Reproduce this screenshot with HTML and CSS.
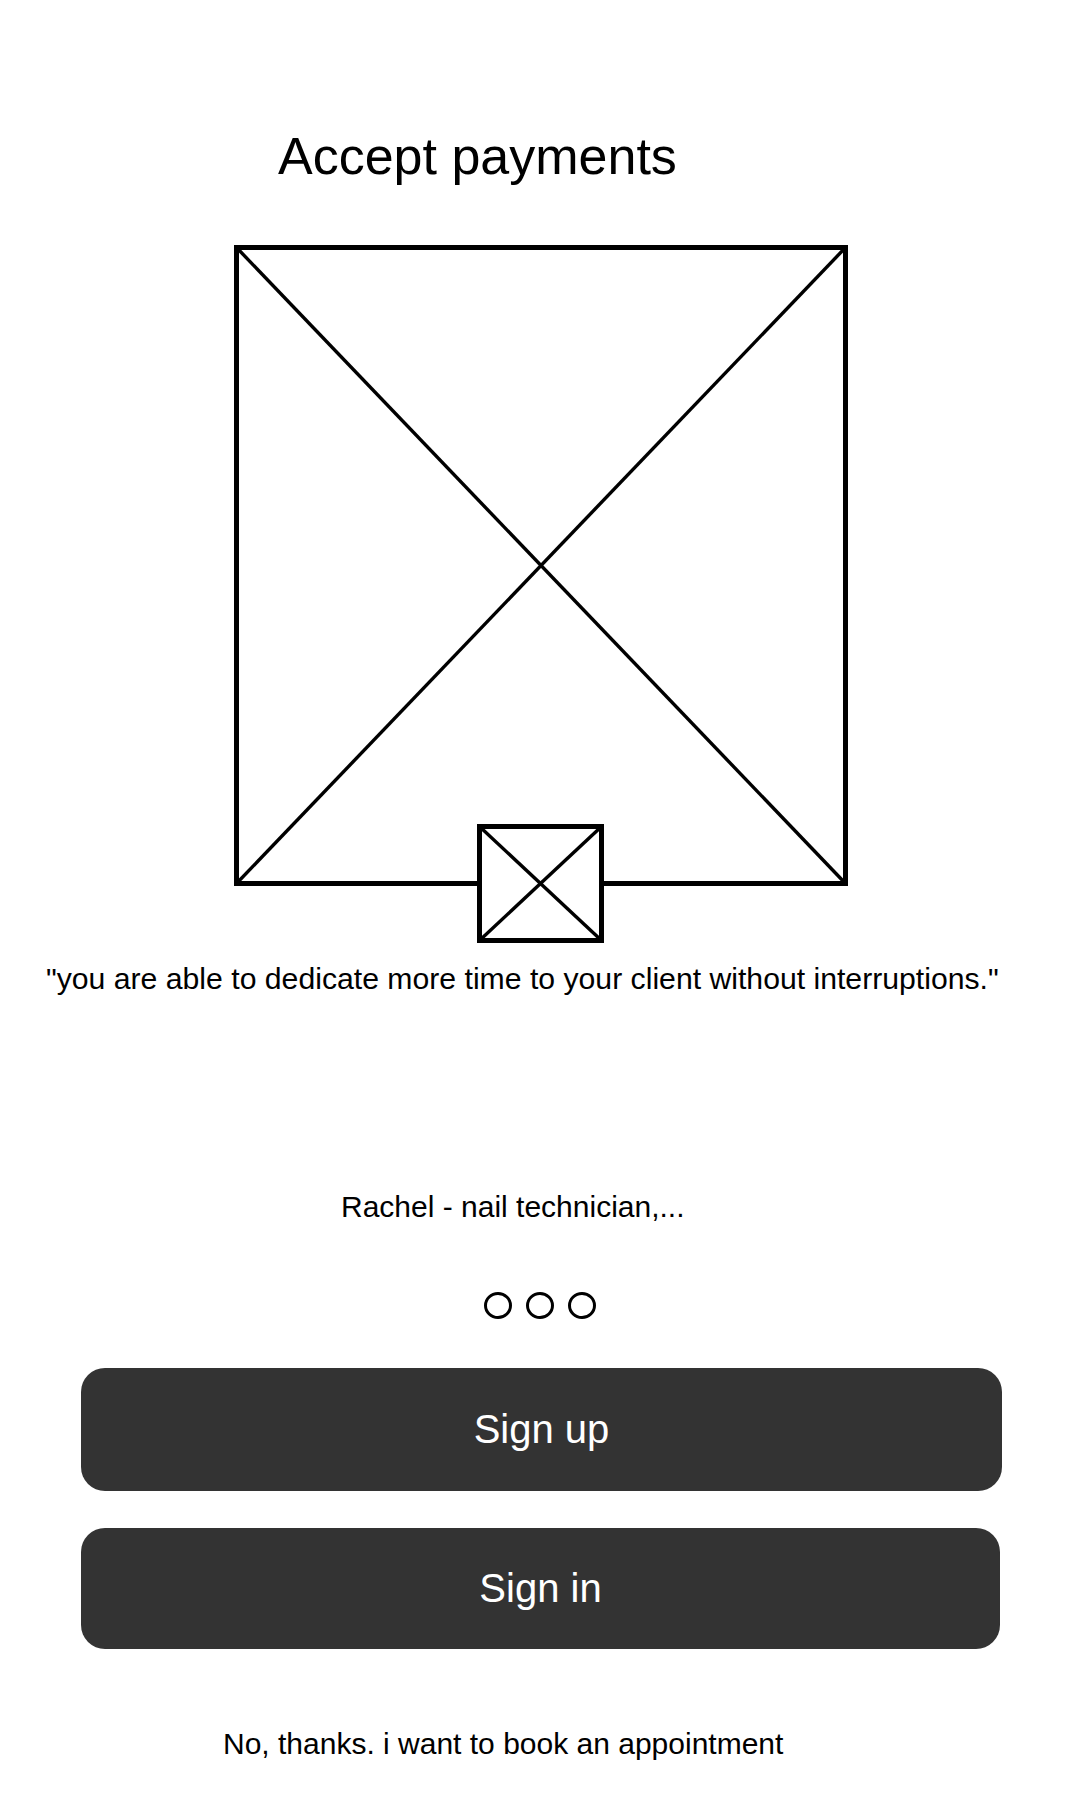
FILE: index.html
```html
<!DOCTYPE html>
<html lang="en">
<head>
<meta charset="utf-8">
<title>Accept payments</title>
<link rel="stylesheet" href="styles.css">
</head>
<body>
<main class="screen">
  <h1 class="title">Accept payments</h1>
  <div class="figure">
    <svg class="placeholder" viewBox="0 0 614 698" width="614" height="698" xmlns="http://www.w3.org/2000/svg">
      <rect x="2.5" y="2.5" width="609" height="636" fill="#fff" stroke="#000" stroke-width="5"/>
      <line x1="2.5" y1="2.5" x2="611.5" y2="638.5" stroke="#000" stroke-width="3.4"/>
      <line x1="611.5" y1="2.5" x2="2.5" y2="638.5" stroke="#000" stroke-width="3.4"/>
      <rect x="245.5" y="581.5" width="122" height="114" fill="#fff" stroke="#000" stroke-width="5"/>
      <line x1="245.5" y1="581.5" x2="367.5" y2="695.5" stroke="#000" stroke-width="3.4"/>
      <line x1="367.5" y1="581.5" x2="245.5" y2="695.5" stroke="#000" stroke-width="3.4"/>
    </svg>
  </div>
  <p class="quote">"you are able to dedicate more time to your client without interruptions."</p>
  <p class="author">Rachel - nail technician,...</p>
  <div class="dots">
    <span class="dot"></span>
    <span class="dot"></span>
    <span class="dot"></span>
  </div>
  <button class="btn btn-signup">Sign up</button>
  <button class="btn btn-signin">Sign in</button>
  <p class="skip">No, thanks. i want to book an appointment</p>
</main>
</body>
</html>
```
FILE: styles.css
```css
html, body {
  margin: 0;
  padding: 0;
  background: #ffffff;
}

body {
  font-family: "Liberation Sans", Arial, sans-serif;
  color: #000;
}

.screen {
  width: 1080px;
  min-height: 1800px;
  display: flex;
  flex-direction: column;
  align-items: flex-start;
}

.title {
  margin: 126px 0 0 0;
  padding-left: 278px;
  font-size: 52px;
  line-height: 60px;
  font-weight: 400;
}

.figure {
  margin: 59px 0 0 234px;
  width: 614px;
  height: 698px;
}

.placeholder {
  display: block;
}

.quote,
.author,
.skip {
  margin: 0;
  font-size: 30px;
  line-height: 35px;
  white-space: nowrap;
}

.quote {
  margin-top: 18px;
  padding-left: 46px;
  font-size: 30.2px;
}

.author {
  margin-top: 193px;
  padding-left: 341px;
}

.dots {
  margin-top: 68px;
  width: 100%;
  display: flex;
  justify-content: center;
  gap: 14px;
}

.dot {
  width: 28px;
  height: 27px;
  box-sizing: border-box;
  border: 3px solid #000;
  border-radius: 50%;
}

.btn {
  margin-left: 81px;
  border: none;
  border-radius: 24px;
  background: #333333;
  color: #ffffff;
  font-family: "Liberation Sans", Arial, sans-serif;
  font-size: 40px;
  display: flex;
  align-items: center;
  justify-content: center;
  padding: 0;
}

.btn-signup {
  margin-top: 49px;
  width: 921px;
  height: 123px;
}

.btn-signin {
  margin-top: 37px;
  width: 919px;
  height: 121px;
}

.skip {
  margin-top: 77px;
  padding-left: 223px;
}
```
